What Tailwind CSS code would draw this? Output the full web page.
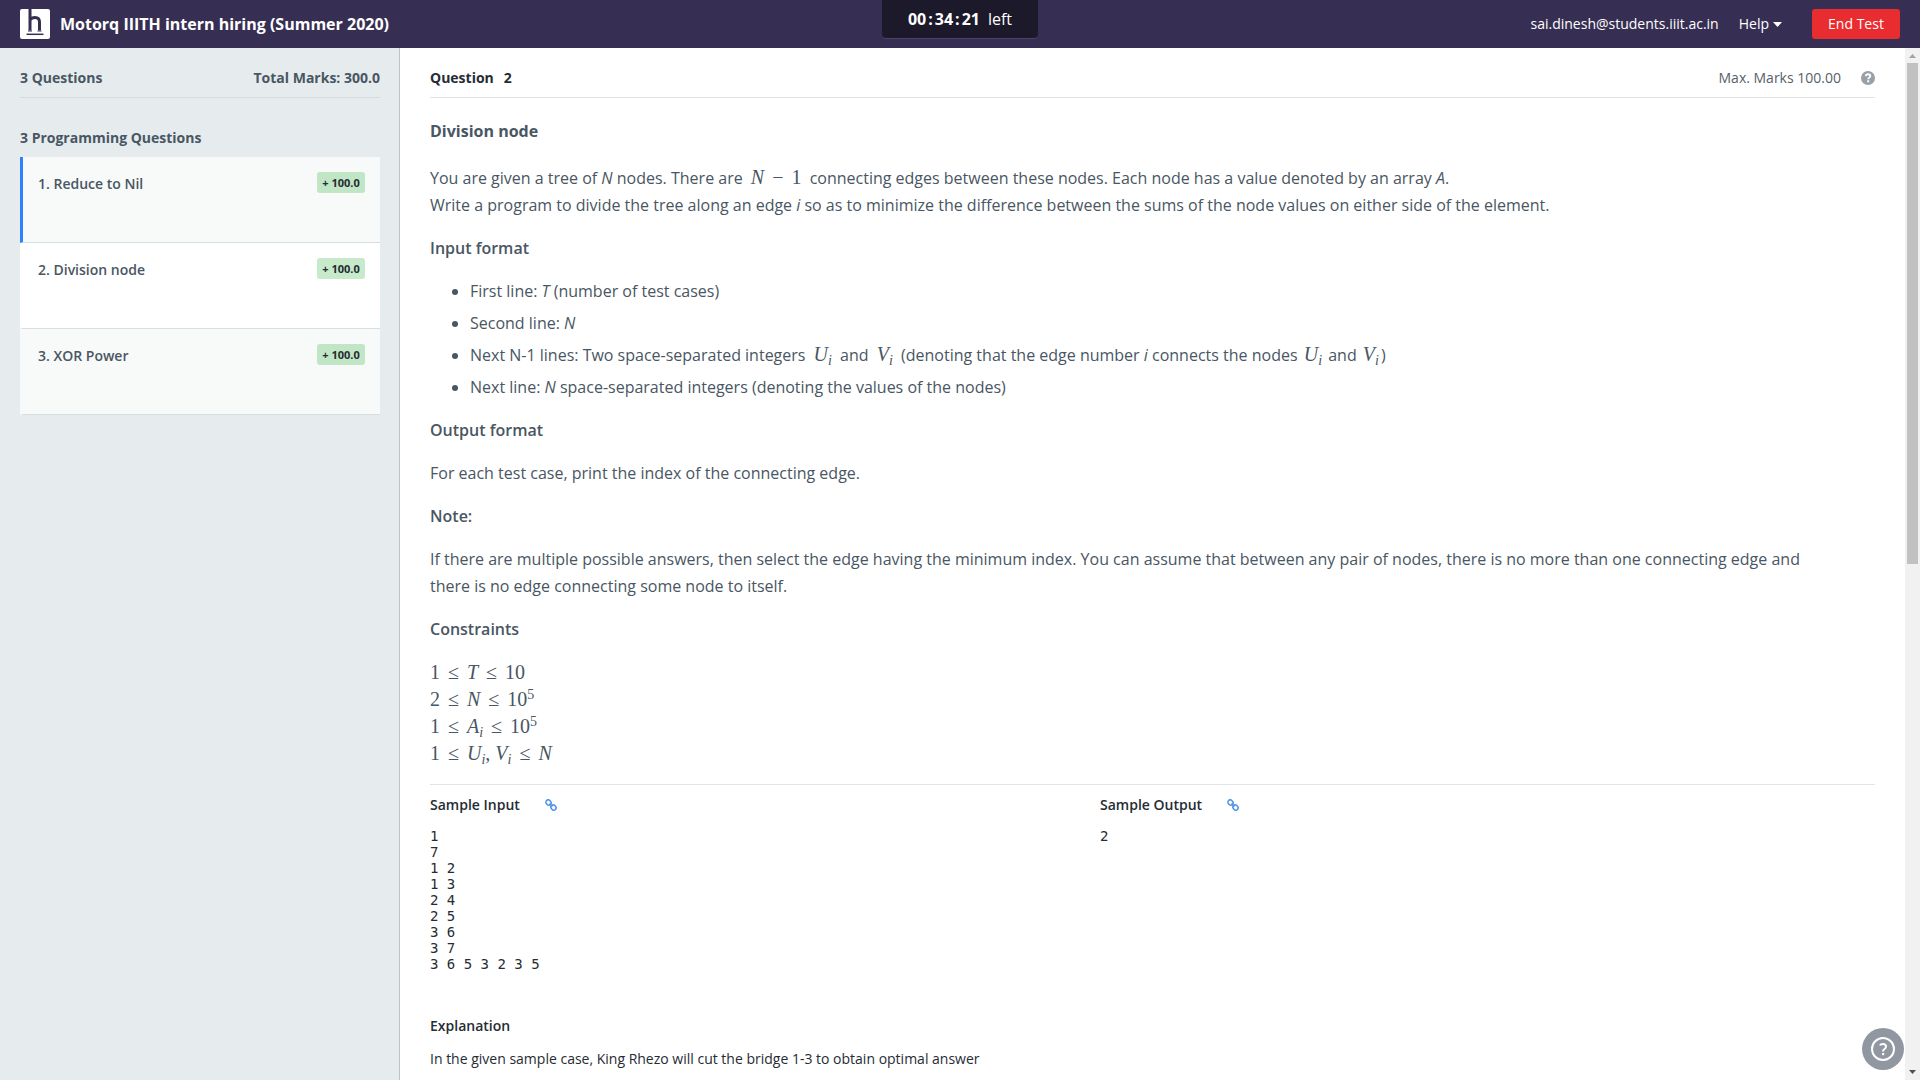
<!DOCTYPE html>
<html lang="en">
<head>
<meta charset="utf-8">
<title>Motorq IIITH intern hiring (Summer 2020)</title>
<script src="https://cdn.jsdelivr.net/npm/@tailwindcss/browser@4"></script>
</head>
<body class="flex h-screen flex-col overflow-hidden bg-white font-['Open_Sans',sans-serif] text-sm text-[#252c33]">

<header class="relative flex h-12 shrink-0 items-center justify-between bg-[#372f53] px-5 text-white">
  <div class="flex items-center gap-[10px]">
    <svg class="size-[30px]" viewBox="0 0 30 30" aria-hidden="true">
      <rect width="30" height="30" rx="2" fill="#fff"/>
      <path d="M10 0V21.500M10 11Q11.500 8.500 15 8.500Q19.500 8.500 19.500 13V21.500" fill="none" stroke="#372f53" stroke-width="3"/>
      <path d="M8 22H12M17.500 22H21.500" stroke="#372f53" stroke-width="1"/>
      <path d="M6.500 25.300H23.500" stroke="#372f53" stroke-width="1.500"/>
    </svg>
    <h1 class="text-base leading-6 font-bold">Motorq IIITH intern hiring (Summer 2020)</h1>
  </div>
  <div class="absolute top-0 left-1/2 flex h-[39px] w-[156px] -translate-x-1/2 items-center justify-center gap-2 rounded-b border-b border-[#4b4468] bg-[#1c192a] text-base">
    <span class="flex gap-[2px] font-bold"><span>00</span><span>:</span><span>34</span><span>:</span><span>21</span></span>
    <span>left</span>
  </div>
  <div class="flex items-center">
    <span>sai.dinesh@students.iiit.ac.in</span>
    <button type="button" class="ml-5 flex items-center gap-1">Help
      <svg class="h-[5px] w-[9px]" viewBox="0 0 9 5" aria-hidden="true"><path d="M0 0H9L4.500 5Z" fill="#fff"/></svg>
    </button>
    <button type="button" class="ml-[30px] h-[30px] w-[88px] rounded-[3px] bg-[#e92c2f]">End Test</button>
  </div>
</header>

<div class="flex min-h-0 flex-1">
  <aside class="w-[400px] shrink-0 border-r border-[#bcc3c8] bg-[#e6ecee] pr-[19px] pl-5 text-[#495663]">
    <div class="flex h-[50px] items-center justify-between border-b border-[#d5dbde] pt-[10px] font-bold">
      <span>3 Questions</span><span>Total Marks: 300.0</span>
    </div>
    <h2 class="pt-[30px] pb-[9px] leading-5 font-bold">3 Programming Questions</h2>
    <nav class="font-semibold">
      <a href="#q1" class="flex h-[86px] items-start justify-between border-b border-l-3 border-b-[#d5dfe1] border-l-[#2f80ff] bg-[#f8faf9] pt-[15px] pr-[15px] pl-[15px]">
        <span class="leading-6">1. Reduce to Nil</span>
        <span class="h-[21px] w-12 rounded-[3px] bg-[#c1e6c5] text-center text-[11px] leading-[21px] font-bold text-[#252c33]">+ 100.0</span>
      </a>
      <a href="#q2" class="flex h-[86px] items-start justify-between border-b border-l-3 border-b-[#d5dfe1] border-l-white bg-white pt-[15px] pr-[15px] pl-[15px]">
        <span class="leading-6">2. Division node</span>
        <span class="h-[21px] w-12 rounded-[3px] bg-[#c6eaca] text-center text-[11px] leading-[21px] font-bold text-[#252c33]">+ 100.0</span>
      </a>
      <a href="#q3" class="flex h-[86px] items-start justify-between border-b border-l-3 border-b-[#d5dfe1] border-l-[#f8faf9] bg-[#f8faf9] pt-[15px] pr-[15px] pl-[15px]">
        <span class="leading-6">3. XOR Power</span>
        <span class="h-[21px] w-12 rounded-[3px] bg-[#c1e6c5] text-center text-[11px] leading-[21px] font-bold text-[#252c33]">+ 100.0</span>
      </a>
    </nav>
  </aside>

  <main class="min-w-0 flex-1 overflow-hidden pr-[30px] pl-[30px]">
    <div class="flex h-[50px] items-center justify-between border-b border-[#e1e4e6] pt-[10px]">
      <h2 class="flex gap-[10px] font-bold"><span>Question</span><span>2</span></h2>
      <div class="flex items-center gap-5 text-[#56616c]">
        <span>Max. Marks 100.00</span>
        <svg class="size-[14px]" viewBox="0 0 14 14" aria-hidden="true">
          <circle cx="7" cy="7" r="7" fill="#98a0a8"/>
          <path d="M4.800 5.200Q5 3.300 7 3.300Q9.300 3.300 9.300 5.100Q9.300 6 8.200 6.700Q7.200 7.300 7.200 8.300" fill="none" stroke="#fff" stroke-width="1.900"/>
          <rect x="6.200" y="9.300" width="2" height="2" fill="#fff"/>
        </svg>
      </div>
    </div>

    <article class="flex flex-col gap-4 pt-5 pr-10 pb-[17px] text-base leading-[27px] text-[#495663]">
      <h3 class="pb-1 font-bold">Division node</h3>
      <p>You are given a tree of <i>N</i> nodes. There are <span class="mx-1 font-['Liberation_Serif',serif] text-xl leading-none"><i>N</i><span class="mx-2">−</span>1</span> connecting edges between these nodes. Each node has a value denoted by an array <i>A</i>.<br>Write a program to divide the tree along an edge <i>i</i> so as to minimize the difference between the sums of the node values on either side of the element.</p>
      <h4 class="font-semibold">Input format</h4>
      <ul class="flex list-disc flex-col gap-[5px] pl-10">
        <li>First line: <i>T</i> (number of test cases)</li>
        <li>Second line: <i>N</i></li>
        <li>Next N-1 lines: Two space-separated integers <span class="mx-1 font-['Liberation_Serif',serif] text-xl leading-none italic">U<sub class="text-sm leading-none">i</sub></span> and <span class="mx-1 font-['Liberation_Serif',serif] text-xl leading-none italic">V<sub class="text-sm leading-none">i</sub></span> (denoting that the edge number <i>i</i> connects the nodes <span class="mx-[2px] font-['Liberation_Serif',serif] text-xl leading-none italic">U<sub class="text-sm leading-none">i</sub></span> and <span class="mx-[2px] font-['Liberation_Serif',serif] text-xl leading-none italic">V<sub class="text-sm leading-none">i</sub></span>)</li>
        <li>Next line: <i>N</i> space-separated integers (denoting the values of the nodes)</li>
      </ul>
      <h4 class="font-semibold">Output format</h4>
      <p>For each test case, print the index of the connecting edge.</p>
      <h4 class="font-semibold">Note:</h4>
      <p>If there are multiple possible answers, then select the edge having the minimum index. You can assume that between any pair of nodes, there is no more than one connecting edge and there is no edge connecting some node to itself.</p>
      <h4 class="font-semibold">Constraints</h4>
      <div class="font-['Liberation_Serif',serif] text-xl leading-[27px]">
        <p class="h-[27px]">1<span class="mx-2">≤</span><i>T</i><span class="mx-2">≤</span>10</p>
        <p class="h-[27px]">2<span class="mx-2">≤</span><i>N</i><span class="mx-2">≤</span>10<sup class="text-sm leading-none">5</sup></p>
        <p class="h-[27px]">1<span class="mx-2">≤</span><i>A<sub class="text-sm leading-none">i</sub></i><span class="mx-2">≤</span>10<sup class="text-sm leading-none">5</sup></p>
        <p class="h-[27px]">1<span class="mx-2">≤</span><i>U<sub class="text-sm leading-none">i</sub></i>, <i>V<sub class="text-sm leading-none">i</sub></i><span class="mx-2">≤</span><i>N</i></p>
      </div>
    </article>

    <div class="grid grid-cols-[670px_1fr] border-t border-[#e1e4e6] pt-[10px]">
      <section>
        <h4 class="flex items-center gap-[25px] leading-5 font-semibold">Sample Input
          <a href="#input" aria-label="Open sample input"><svg class="size-3" viewBox="0 0 12 12" fill="none" stroke="#4a90e8" stroke-width="1.500" aria-hidden="true"><rect x="0.800" y="1.200" width="5.400" height="4.600" rx="2.300" transform="rotate(45 3.500 3.500)"/><rect x="5.800" y="6.200" width="5.400" height="4.600" rx="2.300" transform="rotate(45 8.500 8.500)"/><path d="M4.500 4.500L7.500 7.500"/></svg></a>
        </h4>
        <pre class="pt-[13px] font-['DejaVu_Sans_Mono',monospace] leading-4">1
7
1 2
1 3
2 4
2 5
3 6
3 7
3 6 5 3 2 3 5</pre>
      </section>
      <section>
        <h4 class="flex items-center gap-[25px] leading-5 font-semibold">Sample Output
          <a href="#output" aria-label="Open sample output"><svg class="size-3" viewBox="0 0 12 12" fill="none" stroke="#4a90e8" stroke-width="1.500" aria-hidden="true"><rect x="0.800" y="1.200" width="5.400" height="4.600" rx="2.300" transform="rotate(45 3.500 3.500)"/><rect x="5.800" y="6.200" width="5.400" height="4.600" rx="2.300" transform="rotate(45 8.500 8.500)"/><path d="M4.500 4.500L7.500 7.500"/></svg></a>
        </h4>
        <pre class="pt-[13px] font-['DejaVu_Sans_Mono',monospace] leading-4">2</pre>
      </section>
    </div>
    <h4 class="pt-11 leading-5 font-semibold">Explanation</h4>
    <p class="pt-[13px] leading-5">In the given sample case, King Rhezo will cut the bridge 1-3 to obtain optimal answer</p>
  </main>

  <div class="flex w-[15px] shrink-0 flex-col items-center bg-[#f1f1f1]" aria-hidden="true">
    <svg class="h-[15px] w-[15px] shrink-0" viewBox="0 0 15 15"><path d="M4 10H11L7.500 6Z" fill="#a3a3a3"/></svg>
    <div class="h-[calc(50%-15px)] w-[11px] bg-[#c1c1c1]"></div>
    <svg class="mt-auto h-[15px] w-[15px] shrink-0" viewBox="0 0 15 15"><path d="M4 5H11L7.500 9Z" fill="#505050"/></svg>
  </div>
</div>

<button type="button" aria-label="Help" class="fixed right-4 bottom-[10px] size-[42px] rounded-full bg-[#9097a1]">
  <svg class="size-[42px]" viewBox="0 0 42 42" aria-hidden="true">
    <circle cx="21" cy="21" r="11" fill="none" stroke="#fff" stroke-width="2"/>
    <path d="M18 17.500Q18.500 16 21 16Q24 16 24 18.500Q24 20 22.500 21Q21 22 21 23.500" fill="none" stroke="#fff" stroke-width="2"/>
    <rect x="20" y="25" width="2.200" height="2.200" fill="#fff"/>
  </svg>
</button>
</body>
</html>
